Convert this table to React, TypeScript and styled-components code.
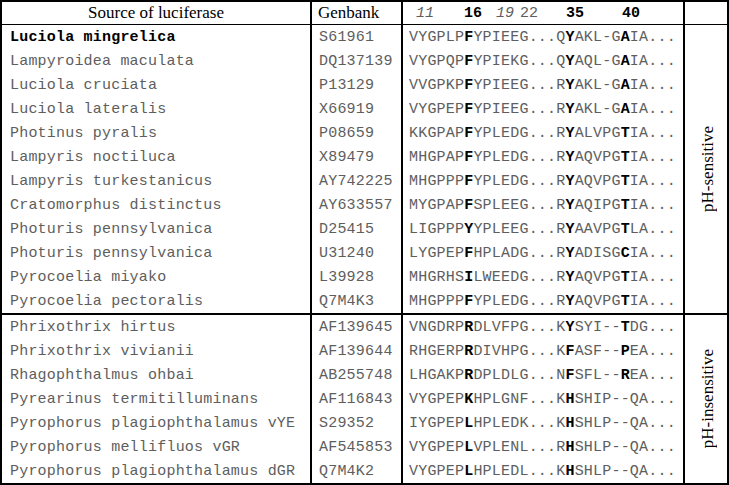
import styled, { createGlobalStyle } from 'styled-components'

const GlobalStyle = createGlobalStyle`
  html, body {
    margin: 0;
    padding: 0;
    background: #fff;
  }
  body {
    font-family: 'Liberation Serif', serif;
  }
`

const COLUMNS = '310px 91px 282px 42px'

interface Species {
  name: string
  genbank: string
  seq: string
  strong?: boolean
}

// letters between * are printed bold
const sensitive: Species[] = [
  { name: 'Luciola mingrelica', genbank: 'S61961', seq: 'VYGPLP*F*YPIEEG...Q*Y*AKL-G*A*IA...', strong: true },
  { name: 'Lampyroidea maculata', genbank: 'DQ137139', seq: 'VYGPQP*F*YPIEKG...Q*Y*AQL-G*A*IA...' },
  { name: 'Luciola cruciata', genbank: 'P13129', seq: 'VVGPKP*F*YPIEEG...R*Y*AKL-G*A*IA...' },
  { name: 'Luciola lateralis', genbank: 'X66919', seq: 'VYGPEP*F*YPIEEG...R*Y*AKL-G*A*IA...' },
  { name: 'Photinus pyralis', genbank: 'P08659', seq: 'KKGPAP*F*YPLEDG...R*Y*ALVPG*T*IA...' },
  { name: 'Lampyris noctiluca', genbank: 'X89479', seq: 'MHGPAP*F*YPLEDG...R*Y*AQVPG*T*IA...' },
  { name: 'Lampyris turkestanicus', genbank: 'AY742225', seq: 'MHGPPP*F*YPLEDG...R*Y*AQVPG*T*IA...' },
  { name: 'Cratomorphus distinctus', genbank: 'AY633557', seq: 'MYGPAP*F*SPLEEG...R*Y*AQIPG*T*IA...' },
  { name: 'Photuris pennsylvanica', genbank: 'D25415', seq: 'LIGPPP*Y*YPLEEG...R*Y*AAVPG*T*LA...' },
  { name: 'Photuris pennsylvanica', genbank: 'U31240', seq: 'LYGPEP*F*HPLADG...R*Y*ADISG*C*IA...' },
  { name: 'Pyrocoelia miyako', genbank: 'L39928', seq: 'MHGRHS*I*LWEEDG...R*Y*AQVPG*T*IA...' },
  { name: 'Pyrocoelia pectoralis', genbank: 'Q7M4K3', seq: 'MHGPPP*F*YPLEDG...R*Y*AQVPG*T*IA...' },
]

const insensitive: Species[] = [
  { name: 'Phrixothrix hirtus', genbank: 'AF139645', seq: 'VNGDRP*R*DLVFPG...K*Y*SYI--*T*DG...' },
  { name: 'Phrixothrix vivianii', genbank: 'AF139644', seq: 'RHGERP*R*DIVHPG...K*F*ASF--*P*EA...' },
  { name: 'Rhagophthalmus ohbai', genbank: 'AB255748', seq: 'LHGAKP*R*DPLDLG...N*F*SFL--*R*EA...' },
  { name: 'Pyrearinus termitilluminans', genbank: 'AF116843', seq: 'VYGPEP*K*HPLGNF...K*H*SHIP--QA...' },
  { name: 'Pyrophorus plagiophthalamus vYE', genbank: 'S29352', seq: 'IYGPEP*L*HPLEDK...K*H*SHLP--QA...' },
  { name: 'Pyrophorus mellifluos vGR', genbank: 'AF545853', seq: 'VYGPEP*L*VPLENL...R*H*SHLP--QA...' },
  { name: 'Pyrophorus plagiophthalamus dGR', genbank: 'Q7M4K2', seq: 'VYGPEP*L*HPLEDL...K*H*SHLP--QA...' },
]

interface Mark {
  label: string
  gap: number
  weight?: 'bold' | 'normal'
  italic?: boolean
}

const marks: Mark[] = [
  { label: '11', gap: 13, italic: true },
  { label: '16', gap: 30, weight: 'bold' },
  { label: '19', gap: 14, italic: true },
  { label: '22', gap: 6 },
  { label: '35', gap: 28, weight: 'bold' },
  { label: '40', gap: 38, weight: 'bold' },
]

const StyledTable = styled.div`
  width: 729px;
  height: 485px;
  box-sizing: border-box;
  border: 2px solid #000;
  background: #fff;
`

const HeaderRow = styled.div`
  display: grid;
  grid-template-columns: ${COLUMNS};
  box-sizing: border-box;
  height: 23px;
  border-bottom: 1px solid #000;
`

const Group = styled.section<{ $divider?: boolean }>`
  display: grid;
  grid-template-columns: ${COLUMNS};
  grid-auto-rows: 24px;
  border-bottom: ${(p) => (p.$divider ? '2px solid #000' : 'none')};
`

const Cell = styled.div<{ $pad?: number; $center?: boolean }>`
  box-sizing: border-box;
  display: flex;
  align-items: center;
  justify-content: ${(p) => (p.$center ? 'center' : 'flex-start')};
  padding-left: ${(p) => p.$pad ?? 0}px;
  border-right: 2px solid #000;
  overflow: hidden;
  white-space: pre;
`

const HeadText = styled.span`
  font-family: 'Liberation Serif', 'Times New Roman', serif;
  font-size: 17px;
  color: #000;
`

const Mono = styled.span<{ $strong?: boolean }>`
  font-family: 'Liberation Mono', 'Courier New', monospace;
  font-size: 15px;
  letter-spacing: 0.2px;
  color: ${(p) => (p.$strong ? '#000' : '#5e5e5e')};
  font-weight: ${(p) => (p.$strong ? 'bold' : 'normal')};
`

const Residue = styled.b`
  color: #000;
  font-weight: bold;
`

const MarkText = styled.span<{ $gap: number; $weight?: string; $italic?: boolean }>`
  margin-left: ${(p) => p.$gap}px;
  font-family: 'Liberation Mono', 'Courier New', monospace;
  font-size: 15px;
  color: ${(p) => (p.$weight === 'bold' ? '#000' : '#5e5e5e')};
  font-weight: ${(p) => p.$weight ?? 'normal'};
  font-style: ${(p) => (p.$italic ? 'italic' : 'normal')};
`

const LabelCell = styled.div`
  grid-column: 4;
  grid-row: 1 / -1;
  display: flex;
  align-items: center;
  justify-content: center;
`

const Vertical = styled.span`
  writing-mode: vertical-rl;
  transform: rotate(180deg);
  font-family: 'Liberation Serif', 'Times New Roman', serif;
  font-size: 17px;
  color: #000;
  margin-left: 4px;
`

function Sequence({ seq }: { seq: string }) {
  const parts = seq.split('*')
  return (
    <Mono>
      {parts.map((part, i) => (i % 2 === 1 ? <Residue key={i}>{part}</Residue> : part))}
    </Mono>
  )
}

function SpeciesGroup({ rows, label, divider }: { rows: Species[]; label: string; divider?: boolean }) {
  return (
    <Group $divider={divider} style={{ gridTemplateRows: `repeat(${rows.length}, 24px)` }}>
      <LabelCell>
        <Vertical>{label}</Vertical>
      </LabelCell>
      {rows.map((row, i) => [
        <Cell key={`n${i}`} $pad={8}>
          <Mono $strong={row.strong}>{row.name}</Mono>
        </Cell>,
        <Cell key={`g${i}`} $pad={7}>
          <Mono>{row.genbank}</Mono>
        </Cell>,
        <Cell key={`s${i}`} $pad={6}>
          <Sequence seq={row.seq} />
        </Cell>,
      ])}
    </Group>
  )
}

export default function App() {
  return (
    <>
      <GlobalStyle />
      <StyledTable role="table">
        <HeaderRow role="row">
          <Cell $center>
            <HeadText>Source of luciferase</HeadText>
          </Cell>
          <Cell $pad={6}>
            <HeadText>Genbank</HeadText>
          </Cell>
          <Cell>
            {marks.map((m) => (
              <MarkText key={m.label} $gap={m.gap} $weight={m.weight} $italic={m.italic}>
                {m.label}
              </MarkText>
            ))}
          </Cell>
          <div />
        </HeaderRow>
        <SpeciesGroup rows={sensitive} label="pH-sensitive" divider />
        <SpeciesGroup rows={insensitive} label="pH-insensitive" />
      </StyledTable>
    </>
  )
}
